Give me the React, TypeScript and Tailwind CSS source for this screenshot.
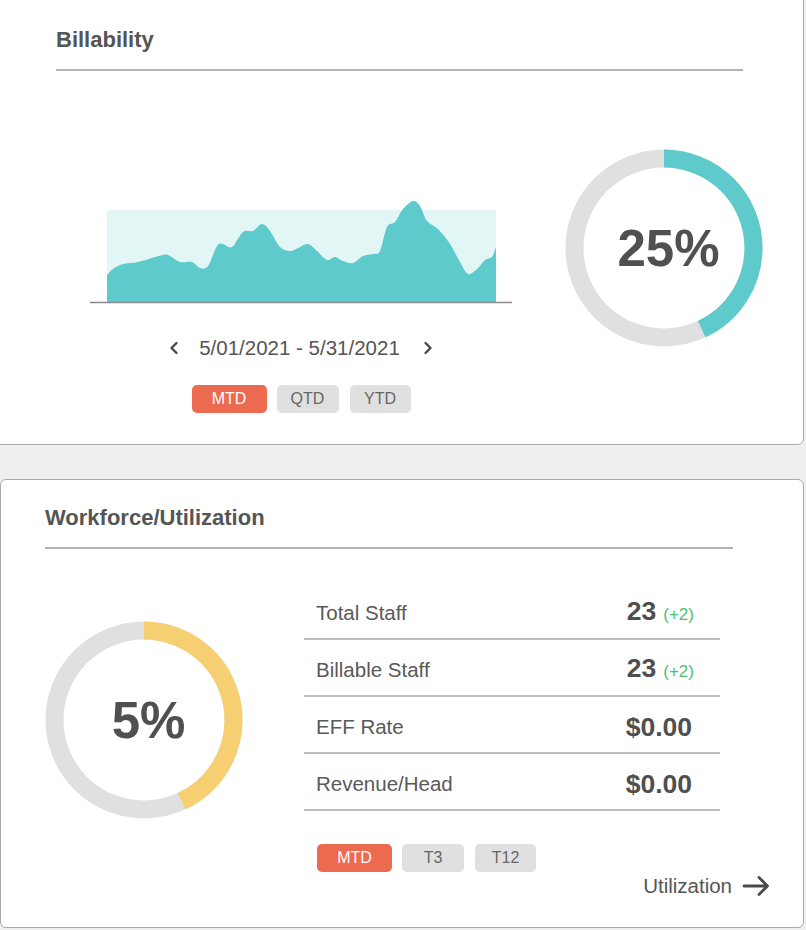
import React from "react";

const pts: [number, number][] = [
  [107, 276], [113, 270], [123, 265], [138, 263], [163, 256], [170, 257], [180, 263],
  [192, 263], [200, 269], [208, 267], [217, 247], [223, 245], [232, 248], [243, 233],
  [253, 232], [262, 225], [270, 232], [280, 248], [290, 252], [298, 249], [308, 245],
  [317, 252], [327, 261], [335, 258], [343, 262], [353, 264], [363, 257], [373, 255],
  [380, 252], [387, 228], [395, 223], [403, 210], [413, 202], [420, 207], [427, 222],
  [438, 230], [450, 245], [460, 263], [468, 275], [477, 270], [485, 261], [492, 258],
  [496, 248],
];

function smoothPath(p: [number, number][]) {
  let d = `M ${p[0][0]} ${p[0][1]}`;
  for (let i = 0; i < p.length - 1; i++) {
    const p0 = p[i - 1] || p[i];
    const p1 = p[i];
    const p2 = p[i + 1];
    const p3 = p[i + 2] || p2;
    const t = 1 / 6;
    const c1x = p1[0] + (p2[0] - p0[0]) * t;
    const c1y = p1[1] + (p2[1] - p0[1]) * t;
    const c2x = p2[0] - (p3[0] - p1[0]) * t;
    const c2y = p2[1] - (p3[1] - p1[1]) * t;
    d += ` C ${c1x.toFixed(2)} ${c1y.toFixed(2)} ${c2x.toFixed(2)} ${c2y.toFixed(2)} ${p2[0]} ${p2[1]}`;
  }
  return d;
}

const areaPath = smoothPath(pts) + " L 496 303 L 107 303 Z";

function Donut({ pct, color, label }: { pct: number; color: string; label: string }) {
  const r = 89.5;
  const c = 2 * Math.PI * r;
  return (
    <div className="relative w-[198px] h-[198px]">
      <svg width="198" height="198" viewBox="0 0 198 198">
        <circle cx="99" cy="99" r={r} fill="none" stroke="#e0e0e0" strokeWidth="18" />
        <circle
          cx="99"
          cy="99"
          r={r}
          fill="none"
          stroke={color}
          strokeWidth="18"
          strokeDasharray={`${c * pct} ${c}`}
          transform="rotate(-90 99 99)"
        />
      </svg>
      <div className="absolute inset-0 flex items-center justify-center pl-[9px] text-[51px] font-bold text-[#505050] leading-none">
        {label}
      </div>
    </div>
  );
}

function Pills({ labels }: { labels: string[] }) {
  const widths = ["w-[75px]", "w-[62px]", "w-[61px]"];
  const gaps = ["", "ml-[10px]", "ml-[11px]"];
  return (
    <div className="flex">
      {labels.map((l, i) => (
        <div
          key={l}
          className={`${widths[i]} ${gaps[i]} h-[28px] rounded-[5px] flex items-center justify-center text-[16px] ${
            i === 0 ? "bg-[#ec6a4f] text-white" : "bg-[#e0e0e0] text-[#666666]"
          }`}
        >
          {l}
        </div>
      ))}
    </div>
  );
}

function Chevron({ dir }: { dir: "l" | "r" }) {
  return (
    <svg width="10" height="14" viewBox="0 0 10 14">
      <polyline
        points={dir === "l" ? "7.5,2 2.5,7 7.5,12" : "2.5,2 7.5,7 2.5,12"}
        fill="none"
        stroke="#4a4a4a"
        strokeWidth="2.4"
        strokeLinecap="round"
        strokeLinejoin="round"
      />
    </svg>
  );
}

function Arrow() {
  return (
    <svg width="28" height="22" viewBox="0 0 28 22">
      <path
        d="M2 11 H25.5 M17 2.5 L25.5 11 L17 19.5"
        fill="none"
        stroke="#4a4a4a"
        strokeWidth="2.8"
        strokeLinecap="round"
        strokeLinejoin="round"
      />
    </svg>
  );
}

const rows = [
  { label: "Total Staff", value: "23", delta: "(+2)" },
  { label: "Billable Staff", value: "23", delta: "(+2)" },
  { label: "EFF Rate", value: "$0.00" },
  { label: "Revenue/Head", value: "$0.00" },
];

export default function App() {
  return (
    <div className="w-[806px] h-[930px] overflow-hidden bg-[#efefef] font-[family-name:Liberation_Sans,Arial,sans-serif] text-[#555555]">
      {/* Billability card */}
      <div className="-mt-[8px] -ml-[6px] w-[810px] bg-white border border-[#a9a9a9] rounded-[6px] pt-[35px] pl-[61px] pb-[31px]">
        <div className="text-[22px] leading-[24px] font-bold text-[#555555]">Billability</div>
        <div className="mt-[17px] w-[687px] h-[2px] bg-[#b3b3b3]" />
        <div className="flex items-start">
          <div className="ml-[34px] mt-[123px] w-[422px] flex flex-col items-center">
            <svg width="422" height="110" viewBox="90 195 422 110" className="block">
              <rect x="107" y="211" width="389" height="92" fill="#e1f6f5" />
              <path d={areaPath} fill="#5ecacb" />
              <line x1="90" y1="303.5" x2="512" y2="303.5" stroke="#8a8a8a" strokeWidth="1.5" />
            </svg>
            <div className="mt-[32px] h-[24px] flex items-center">
              <Chevron dir="l" />
              <span className="ml-[20px] mr-[23px] text-[20.5px] leading-[24px] text-[#555555]">
                5/01/2021 - 5/31/2021
              </span>
              <Chevron dir="r" />
            </div>
            <div className="mt-[25px]">
              <Pills labels={["MTD", "QTD", "YTD"]} />
            </div>
          </div>
          <div className="ml-[53px] mt-[78px]">
            <Donut pct={0.43} color="#5ecacb" label="25%" />
          </div>
        </div>
      </div>

      {/* Workforce card */}
      <div className="mt-[34px] w-[804px] bg-white border border-[#a9a9a9] rounded-[6px] pt-[26px] pl-[44px] pb-[29px]">
        <div className="text-[22px] leading-[24px] font-bold text-[#555555]">Workforce/Utilization</div>
        <div className="mt-[17px] w-[688px] h-[2px] bg-[#b3b3b3]" />
        <div className="flex items-start">
          <div className="mt-[72px]">
            <Donut pct={0.43} color="#f7cf73" label="5%" />
          </div>
          <div className="ml-[61px] mt-[34px] w-[470px]">
            <div className="w-[416px]">
              {rows.map((r) => (
                <div
                  key={r.label}
                  className="h-[57px] border-b-2 border-[#bdbdbd] flex items-center justify-between pl-[12px] pr-[28px] pt-[4px]"
                >
                  <span className="text-[20.5px] leading-[24px] text-[#595959]">{r.label}</span>
                  <span className="flex items-baseline">
                    <span className="text-[26.5px] leading-[28px] font-bold text-[#4f4f4f]">{r.value}</span>
                    {r.delta && (
                      <span className="ml-[7px] -mr-[2px] text-[17px] text-[#4fbf6f]">{r.delta}</span>
                    )}
                  </span>
                </div>
              ))}
            </div>
            <div className="flex items-start justify-between">
              <div className="ml-[13px] mt-[33px]">
                <Pills labels={["MTD", "T3", "T12"]} />
              </div>
              <div className="mt-[63px] flex items-center mr-[4px]">
                <span className="text-[20.5px] leading-[24px] text-[#555555]">Utilization</span>
                <span className="ml-[10px] flex">
                  <Arrow />
                </span>
              </div>
            </div>
          </div>
        </div>
      </div>
    </div>
  );
}
